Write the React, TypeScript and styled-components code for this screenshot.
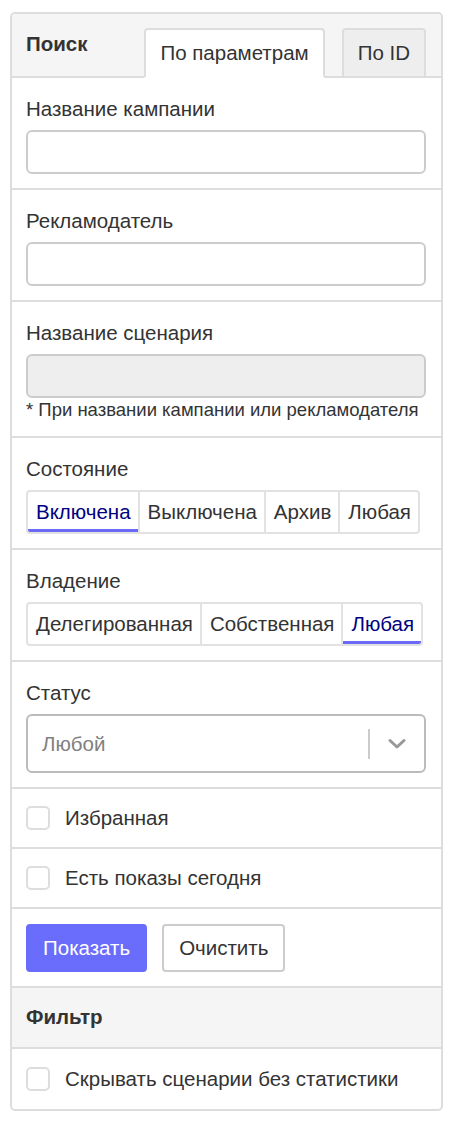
import React, { useState } from "react";
import styled, { createGlobalStyle } from "styled-components";

const GlobalStyle = createGlobalStyle`
  html, body {
    margin: 0;
    padding: 0;
    background: #fff;
  }
  body {
    font-family: "Liberation Sans", Arial, sans-serif;
    color: #333;
  }
  * {
    box-sizing: border-box;
  }
`;

const Page = styled.div`
  padding: 12px 13px 23px 10px;
`;

const Panel = styled.div`
  width: 433px;
  border: 2px solid #ddd;
  border-radius: 5px;
  overflow: hidden;
  background: #fff;
`;

const Header = styled.div`
  display: flex;
  align-items: flex-start;
  background: #f5f5f5;
  border-bottom: 2px solid #ddd;
  padding: 14px 15px 0 14px;
  height: 64px;
`;

const HeaderTitle = styled.div`
  font-weight: bold;
  font-size: 20.5px;
  line-height: 24px;
  padding-top: 4px;
`;

const Tabs = styled.div`
  display: flex;
  gap: 17px;
  margin-left: auto;
`;

const Tab = styled.div<{ $active?: boolean }>`
  height: 50px;
  padding: 0 14px;
  display: flex;
  align-items: center;
  font-size: 20.5px;
  border: 2px solid #ddd;
  border-radius: 4px 4px 0 0;
  background: ${(p) => (p.$active ? "#fff" : "#eee")};
  border-bottom-color: ${(p) => (p.$active ? "#fff" : "#ddd")};
  color: #333;
  cursor: pointer;
`;

const Section = styled.div<{ $compact?: boolean }>`
  padding: ${(p) => (p.$compact ? "15px" : "20px")} 15px 14px 14px;
  border-bottom: 2px solid #ddd;
`;

const Label = styled.div`
  font-size: 20.5px;
  line-height: 22px;
  margin-bottom: 10px;
`;

const TextInput = styled.input`
  display: block;
  width: 100%;
  height: 44px;
  border: 2px solid #ccc;
  border-radius: 6px;
  background: ${(p) => (p.disabled ? "#eee" : "#fff")};
  font-size: 20px;
  font-family: inherit;
  padding: 0 12px;
  outline: none;
`;

const Note = styled.div`
  font-size: 18.5px;
  line-height: 22px;
  margin-top: 1px;
  margin-bottom: 1px;
  color: #333;
`;

const Segments = styled.div`
  display: inline-flex;
  height: 44px;
  border: 2px solid #e2e2e2;
  border-radius: 4px;
  overflow: hidden;
`;

const Segment = styled.div<{ $active?: boolean }>`
  display: flex;
  align-items: center;
  padding: 0 7px 0 8px;
  font-size: 20.5px;
  color: ${(p) => (p.$active ? "#00007f" : "#333")};
  border-left: 2px solid #e2e2e2;
  box-shadow: ${(p) => (p.$active ? "inset 0 -3px 0 #6a6af6" : "none")};
  cursor: pointer;
  &:first-child {
    border-left: none;
  }
`;

const SelectBox = styled.div`
  display: flex;
  align-items: center;
  height: 59px;
  border: 2px solid #bbb;
  border-radius: 6px;
  padding-left: 14px;
`;

const SelectValue = styled.div`
  flex: 1;
  font-size: 20.5px;
  color: #808080;
`;

const SelectSep = styled.div`
  width: 2px;
  height: 30px;
  background: #ccc;
`;

const SelectArrow = styled.div`
  width: 54px;
  display: flex;
  align-items: center;
  justify-content: center;
  color: #999;
`;

const CheckRow = styled.label<{ $last?: boolean }>`
  display: flex;
  align-items: center;
  height: 60px;
  padding: 0 15px 0 14px;
  border-bottom: ${(p) => (p.$last ? "none" : "2px solid #ddd")};
  font-size: 20.5px;
  cursor: pointer;
`;

const CheckBox = styled.span`
  width: 24px;
  height: 24px;
  border: 2px solid #ddd;
  border-radius: 5px;
  margin-right: 15px;
  background: #fff;
`;

const Buttons = styled.div`
  display: flex;
  gap: 15px;
`;

const Button = styled.button<{ $primary?: boolean }>`
  height: 48px;
  padding: 0 15px;
  font-size: 20.5px;
  font-family: inherit;
  border-radius: 4px;
  border: 2px solid ${(p) => (p.$primary ? "#6a6cfb" : "#ccc")};
  background: ${(p) => (p.$primary ? "#6a6cfb" : "#fff")};
  color: ${(p) => (p.$primary ? "#fff" : "#333")};
  cursor: pointer;
`;

const SubHeader = styled.div`
  height: 61px;
  display: flex;
  align-items: center;
  padding: 0 15px 2px 14px;
  background: #f5f5f5;
  border-bottom: 2px solid #ddd;
  font-weight: bold;
  font-size: 20.5px;
`;

const Chevron = () => (
  <svg width="18" height="12" viewBox="0 0 18 12">
    <path d="M2 2.5 L9 9 L16 2.5" fill="none" stroke="currentColor" strokeWidth="3" strokeLinecap="round" strokeLinejoin="round" />
  </svg>
);

type SegProps = { items: string[]; value: string; onChange: (v: string) => void };

const SegmentGroup = ({ items, value, onChange }: SegProps) => (
  <Segments>
    {items.map((it) => (
      <Segment key={it} $active={it === value} onClick={() => onChange(it)}>
        {it}
      </Segment>
    ))}
  </Segments>
);

export default function App() {
  const [tab, setTab] = useState("params");
  const [state, setState] = useState("Включена");
  const [owner, setOwner] = useState("Любая");

  return (
    <Page>
      <GlobalStyle />
      <Panel>
        <Header>
          <HeaderTitle>Поиск</HeaderTitle>
          <Tabs>
            <Tab $active={tab === "params"} onClick={() => setTab("params")}>
              По параметрам
            </Tab>
            <Tab $active={tab === "id"} onClick={() => setTab("id")}>
              По ID
            </Tab>
          </Tabs>
        </Header>

        <Section>
          <Label>Название кампании</Label>
          <TextInput />
        </Section>

        <Section>
          <Label>Рекламодатель</Label>
          <TextInput />
        </Section>

        <Section>
          <Label>Название сценария</Label>
          <TextInput disabled />
          <Note>* При названии кампании или рекламодателя</Note>
        </Section>

        <Section>
          <Label>Состояние</Label>
          <SegmentGroup
            items={["Включена", "Выключена", "Архив", "Любая"]}
            value={state}
            onChange={setState}
          />
        </Section>

        <Section>
          <Label>Владение</Label>
          <SegmentGroup
            items={["Делегированная", "Собственная", "Любая"]}
            value={owner}
            onChange={setOwner}
          />
        </Section>

        <Section>
          <Label>Статус</Label>
          <SelectBox>
            <SelectValue>Любой</SelectValue>
            <SelectSep />
            <SelectArrow>
              <Chevron />
            </SelectArrow>
          </SelectBox>
        </Section>

        <CheckRow>
          <CheckBox />
          Избранная
        </CheckRow>
        <CheckRow>
          <CheckBox />
          Есть показы сегодня
        </CheckRow>

        <Section $compact>
          <Buttons>
            <Button $primary>Показать</Button>
            <Button>Очистить</Button>
          </Buttons>
        </Section>

        <SubHeader>Фильтр</SubHeader>
        <CheckRow $last>
          <CheckBox />
          Скрывать сценарии без статистики
        </CheckRow>
      </Panel>
    </Page>
  );
}
